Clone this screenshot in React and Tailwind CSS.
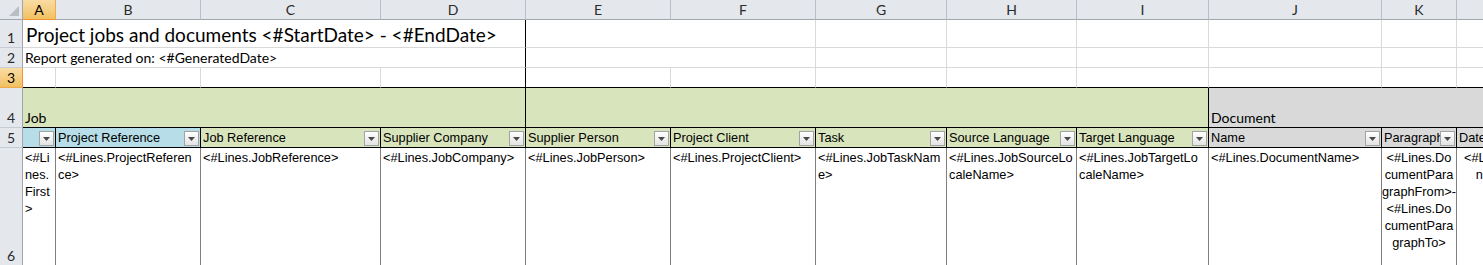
import React from 'react'

const calibri = { fontFamily: 'Lato, "Open Sans", sans-serif' }
const arial = { fontFamily: '"Liberation Sans", Arial, sans-serif' }

const letters = ['A', 'B', 'C', 'D', 'E', 'F', 'G', 'H', 'I', 'J', 'K', 'L']

// row 5 header cells
const headers = [
  { label: '', bg: 'bg-[#b7dee8]' },
  { label: 'Project Reference', bg: 'bg-[#b7dee8]' },
  { label: 'Job Reference', bg: 'bg-[#d8e4bc]' },
  { label: 'Supplier Company', bg: 'bg-[#d8e4bc]' },
  { label: 'Supplier Person', bg: 'bg-[#d8e4bc]' },
  { label: 'Project Client', bg: 'bg-[#d8e4bc]' },
  { label: 'Task', bg: 'bg-[#d8e4bc]' },
  { label: 'Source Language', bg: 'bg-[#d8e4bc]' },
  { label: 'Target Language', bg: 'bg-[#d8e4bc]' },
  { label: 'Name', bg: 'bg-[#d9d9d9]' },
  { label: 'Paragraph', bg: 'bg-[#d9d9d9]' },
  { label: 'Date', bg: 'bg-[#d9d9d9]' },
]

// row 6 data, already wrapped the way Excel wraps them
const data = [
  { lines: ['<#Li', 'nes.', 'First', '>'] },
  { lines: ['<#Lines.ProjectReferen', 'ce>'] },
  { lines: ['<#Lines.JobReference>'] },
  { lines: ['<#Lines.JobCompany>'] },
  { lines: ['<#Lines.JobPerson>'] },
  { lines: ['<#Lines.ProjectClient>'] },
  { lines: ['<#Lines.JobTaskNam', 'e>'] },
  { lines: ['<#Lines.JobSourceLo', 'caleName>'] },
  { lines: ['<#Lines.JobTargetLo', 'caleName>'] },
  { lines: ['<#Lines.DocumentName>'] },
  { lines: ['<#Lines.Do', 'cumentPara', 'graphFrom>-', '<#Lines.Do', 'cumentPara', 'graphTo>'], center: true },
  { lines: ['<#Lines.Do', 'nDate>'], center: true },
]

const RowHeader = ({ n, selected }) => (
  <div
    className={`flex items-end justify-center pb-[1px] border-r border-b text-[14px] leading-[17px] ${
      selected
        ? 'bg-linear-to-b from-[#f9dca3] to-[#f1c15f] border-r-[#f29436] border-b-[#f2a94a] text-[#000]'
        : 'bg-[#e4e8ed] border-r-[#9ea6af] border-b-[#c6ccd3] text-[#2a2a2a]'
    }`}
    style={calibri}
  >
    {n}
  </div>
)

const FilterButton = () => (
  <div className="absolute right-[1px] bottom-[1px] w-[15px] h-[15px] border border-[#a3a3a3] bg-linear-to-b from-[#ffffff] to-[#e3e3e3] flex items-center justify-center">
    <svg width="7" height="4" viewBox="0 0 7 4">
      <path d="M0 0H7L3.5 4Z" fill="#4a4a4a" />
    </svg>
  </div>
)

const grid = 'border-r border-b border-r-[#d9d9d9] border-b-[#d9d9d9]'

export default function App() {
  return (
    <div className="w-[1483px] h-[265px] overflow-hidden bg-white">
      <div className="grid grid-cols-[23px_33px_145px_180px_145px_145px_145px_131px_130px_132px_173px_75px_80px] grid-rows-[20px_28px_20px_20px_40px_20px_118px]">
        {/* column letters */}
        <div className="relative bg-[#e4e8ed] border-r border-b border-r-[#9ea6af] border-b-[#9ea6af]">
          <svg className="absolute right-[3px] bottom-[3px]" width="10" height="10" viewBox="0 0 10 10">
            <path d="M10 0V10H0Z" fill="#b9bec5" />
          </svg>
        </div>
        {letters.map((l, i) => (
          <div
            key={l}
            className={`flex items-center justify-center border-r border-b text-[14px] ${
              i === 0
                ? 'bg-linear-to-b from-[#f9dca3] to-[#f1c15f] border-r-[#f2a94a] border-b-[#f29436] text-[#000]'
                : 'bg-[#e4e8ed] border-r-[#b9bfc7] border-b-[#9ea6af] text-[#2a2a2a]'
            }`}
            style={calibri}
          >
            {l}
          </div>
        ))}

        {/* row 1 */}
        <RowHeader n="1" />
        <div className="col-span-4 flex items-end pl-[3px] pb-[1px] border-r border-b border-r-[#000] border-b-[#d9d9d9] whitespace-nowrap text-[19px] leading-[22px] text-[#000]" style={calibri}>
          Project jobs and documents &lt;#StartDate&gt; - &lt;#EndDate&gt;
        </div>
        <div className={`col-span-2 ${grid}`} />
        <div className={grid} />
        <div className={grid} />
        <div className={grid} />
        <div className={grid} />
        <div className={grid} />
        <div className={grid} />

        {/* row 2 */}
        <RowHeader n="2" />
        <div className="col-span-4 flex items-end pl-[2px] pb-[1px] border-r border-b border-r-[#000] border-b-[#d9d9d9] whitespace-nowrap text-[14px] leading-[17px] text-[#000]" style={calibri}>
          Report generated on: &lt;#GeneratedDate&gt;
        </div>
        <div className={`col-span-2 ${grid}`} />
        <div className={grid} />
        <div className={grid} />
        <div className={grid} />
        <div className={grid} />
        <div className={grid} />
        <div className={grid} />

        {/* row 3 */}
        <RowHeader n="3" selected />
        {letters.map((l) => (
          <div
            key={l}
            className={`border-r border-b border-b-[#000] ${l === 'D' ? 'border-r-[#000]' : 'border-r-[#d9d9d9]'}`}
          />
        ))}

        {/* row 4 */}
        <RowHeader n="4" />
        <div className="col-span-4 flex items-end pl-[2px] pb-[1px] bg-[#d8e4bc] border-r border-b border-[#000] text-[14px] leading-[17px] text-[#000]" style={calibri}>
          Job
        </div>
        <div className="col-span-5 bg-[#d8e4bc] border-r border-b border-[#000]" />
        <div className="col-span-3 flex items-end pl-[2px] pb-[1px] bg-[#d9d9d9] border-b border-[#000] text-[14px] leading-[17px] text-[#000]" style={calibri}>
          Document
        </div>

        {/* row 5 */}
        <RowHeader n="5" />
        {headers.map((h, i) => (
          <div
            key={i}
            className={`relative flex items-center overflow-hidden pl-[2px] border-r border-b border-[#000] whitespace-nowrap text-[12.75px] leading-[17px] text-[#000] ${h.bg}`}
            style={arial}
          >
            {h.label}
            <FilterButton />
          </div>
        ))}

        {/* row 6 */}
        <RowHeader n="6" />
        {data.map((d, i) => (
          <div
            key={i}
            className={`flex flex-col pt-[1px] px-[2px] overflow-hidden border-r border-r-[#808080] whitespace-nowrap text-[12.75px] leading-[17px] text-[#000] ${
              d.center ? 'items-center' : 'items-start'
            }`}
            style={arial}
          >
            {d.lines.map((line, j) => (
              <span key={j}>{line}</span>
            ))}
          </div>
        ))}
      </div>
    </div>
  )
}
